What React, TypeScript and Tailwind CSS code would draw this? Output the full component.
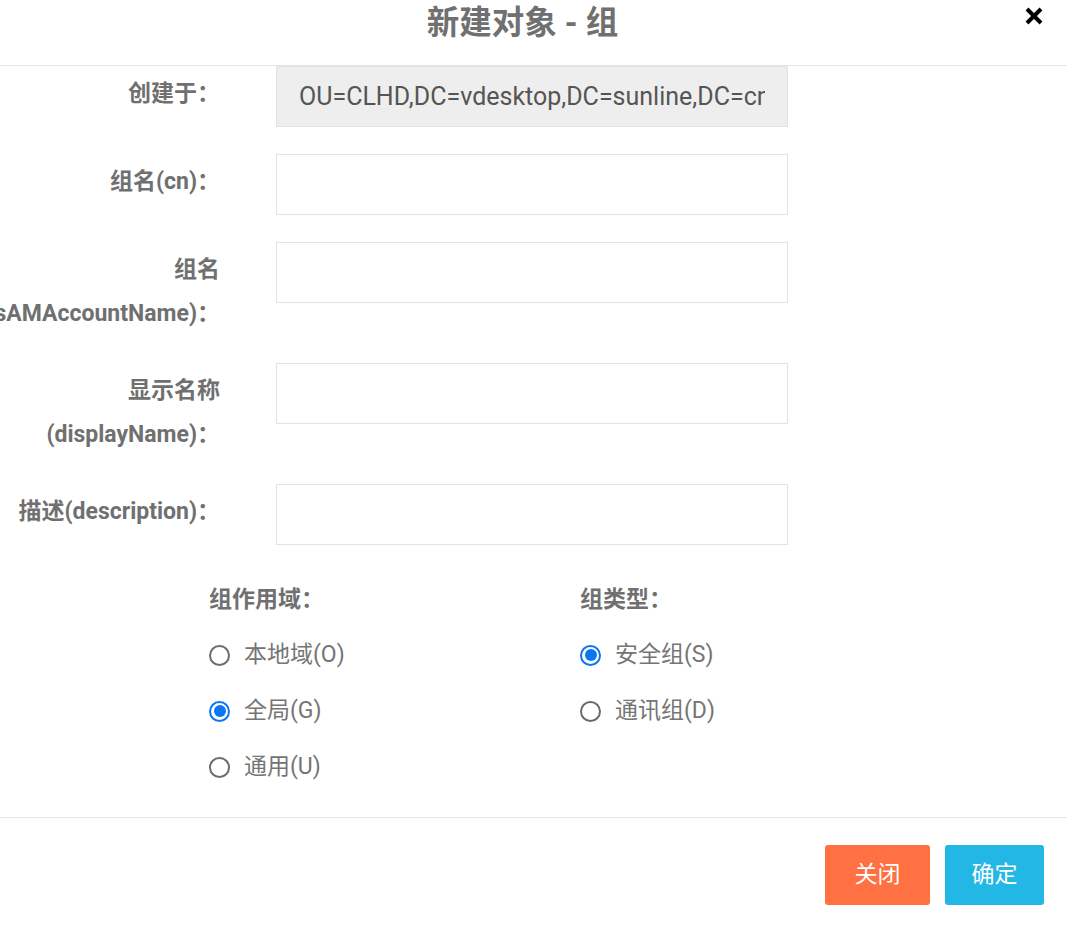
import { useState } from "react";

const font = { fontFamily: 'Roboto, "Noto Sans CJK SC", sans-serif' };

function Radio({ checked, label, onClick }: { checked: boolean; label: string; onClick: () => void }) {
  return (
    <button type="button" onClick={onClick} className="flex h-[56px] items-center gap-[14px]">
      {checked ? (
        <span className="flex h-[21px] w-[21px] items-center justify-center rounded-full border-[2px] border-[#0a75f5]">
          <span className="h-[12px] w-[12px] rounded-full bg-[#0a75f5]"></span>
        </span>
      ) : (
        <span className="h-[21px] w-[21px] rounded-full border-[2px] border-[#6b6b6b]"></span>
      )}
      <span className="text-[23px] text-[#757575]">{label}</span>
    </button>
  );
}

function Row({ label, value, gray }: { label: React.ReactNode; value?: string; gray?: boolean }) {
  return (
    <div className="flex items-start">
      <div className="-ml-[20px] w-[240px] shrink-0 pt-[6px] text-right text-[23px] font-bold leading-[44px] text-[#707070]">
        {label}
      </div>
      <div
        className={
          "ml-[56px] flex h-[61px] w-[512px] items-center border border-[#dde5e5] px-[22px] text-[25px] text-[#555] " +
          (gray ? "bg-[#eeeeee]" : "bg-white")
        }
      >
        <div className="w-full overflow-hidden whitespace-nowrap">{value}</div>
      </div>
    </div>
  );
}

export default function App() {
  const [scope, setScope] = useState("G");
  const [type, setType] = useState("S");

  return (
    <div className="h-[925px] w-[1067px] overflow-hidden bg-white" style={font}>
      <header className="relative flex h-[66px] items-center justify-center border-b border-[#e5e5e5] pr-[22px]">
        <h1 className="pb-[18px] text-[32.5px] font-bold text-[#707070]">新建对象 - 组</h1>
        <button className="absolute right-[23px] top-[6px]" aria-label="close">
          <svg width="20" height="20" viewBox="0 0 20 20">
            <path d="M3 3 L17 17 M17 3 L3 17" stroke="#000" strokeWidth="4" />
          </svg>
        </button>
      </header>

      <div className="flex flex-col gap-[27px]">
        <Row label="创建于：" value="OU=CLHD,DC=vdesktop,DC=sunline,DC=cn" gray />
        <Row label="组名(cn)：" />
        <Row label="组名(sAMAccountName)：" />
        <Row label="显示名称(displayName)：" />
        <Row label="描述(description)：" />
      </div>

      <div className="flex h-[273px] border-b border-[#e5e5e5] pl-[209px] pt-[41px]">
        <div className="w-[371px]">
          <div className="mb-[13px] text-[23px] font-bold leading-[28px] text-[#707070]">组作用域：</div>
          <Radio checked={scope === "O"} label="本地域(O)" onClick={() => setScope("O")} />
          <Radio checked={scope === "G"} label="全局(G)" onClick={() => setScope("G")} />
          <Radio checked={scope === "U"} label="通用(U)" onClick={() => setScope("U")} />
        </div>
        <div>
          <div className="mb-[13px] text-[23px] font-bold leading-[28px] text-[#707070]">组类型：</div>
          <Radio checked={type === "S"} label="安全组(S)" onClick={() => setType("S")} />
          <Radio checked={type === "D"} label="通讯组(D)" onClick={() => setType("D")} />
        </div>
      </div>

      <div className="flex justify-end gap-[15px] pr-[23px] pt-[27px]">
        <button className="h-[60px] w-[105px] rounded-[3px] bg-[#ff7043] text-[23px] text-white">关闭</button>
        <button className="h-[60px] w-[99px] rounded-[3px] bg-[#23b7e5] text-[23px] text-white">确定</button>
      </div>
    </div>
  );
}
